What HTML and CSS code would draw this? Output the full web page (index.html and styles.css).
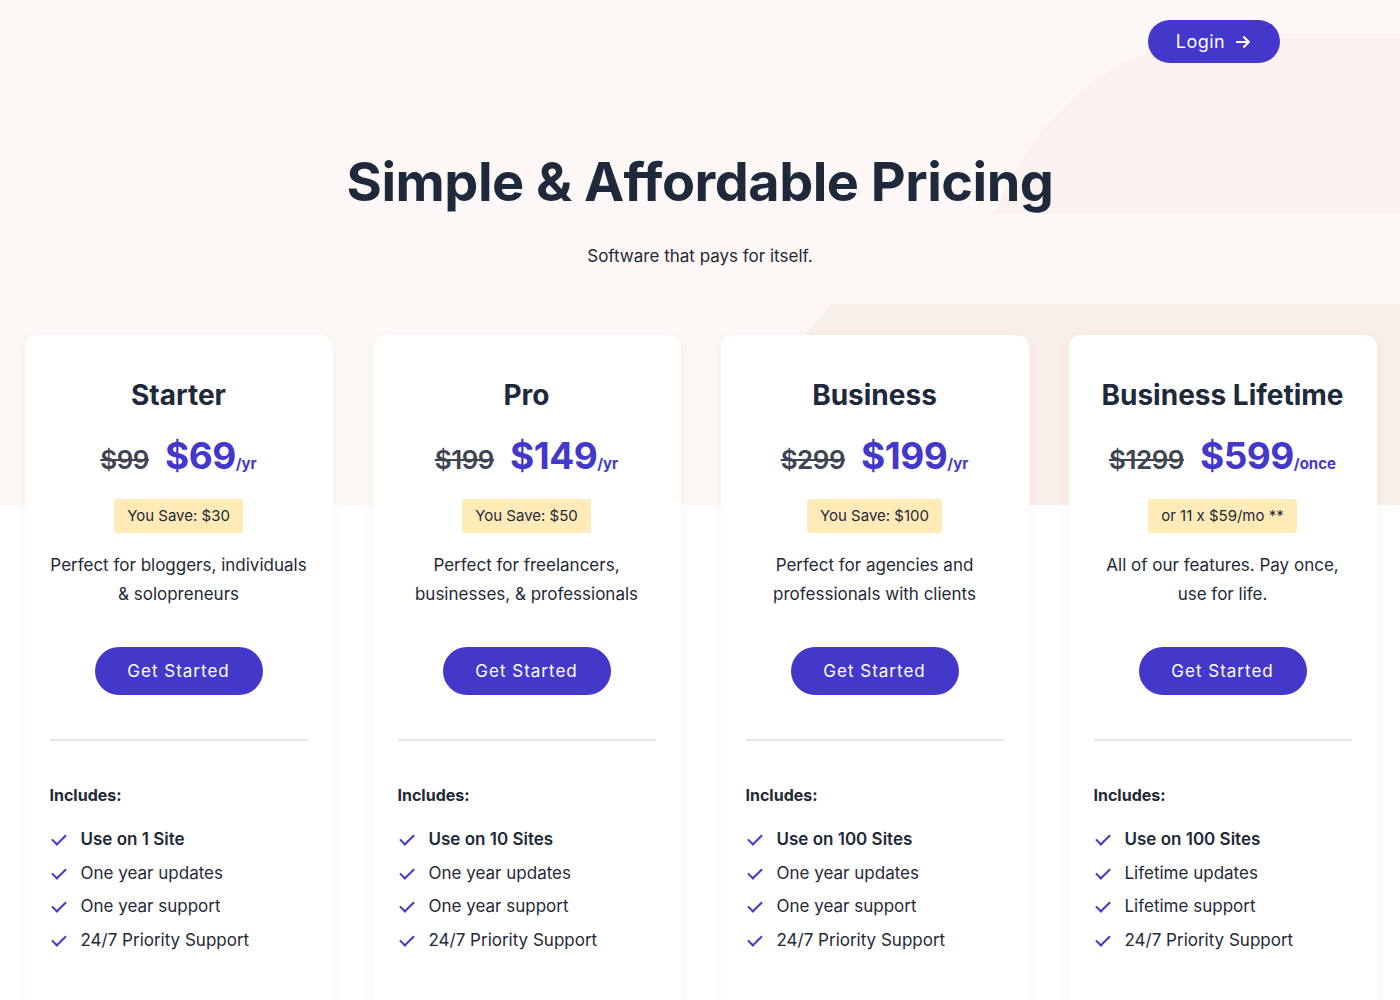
FILE: index.html
```html
<!DOCTYPE html>
<html lang="en">
<head>
    <meta charset="UTF-8">
    <meta name="viewport" content="width=device-width, initial-scale=1.0">
    <title>Pricing</title>
    <link rel="stylesheet" href="styles.css">
</head>
<body>

<div class="page">
    <!-- soft background shapes -->
    <svg class="bg-shapes" width="1400" height="505" viewBox="0 0 1400 505">
        <path d="M995 213 C1030 125 1100 50 1210 38 L1400 38 L1400 213 Z" fill="#faf2ee"/>
        <path d="M790 505 L790 352 L828 308 C830 305 832 304 836 304 L1400 304 L1400 505 Z" fill="#f9efea"/>
    </svg>

    <header class="topbar">
        <a href="#" class="login-btn">Login
            <svg width="18" height="18" viewBox="0 0 18 18" fill="none" stroke="currentColor" stroke-width="2.2" stroke-linecap="round" stroke-linejoin="round"><path d="M3 9h11.5M10 4.2 14.8 9 10 13.8"/></svg>
        </a>
    </header>

    <section class="hero">
        <h1>Simple &amp; Affordable Pricing</h1>
        <p>Software that pays for itself.</p>
    </section>

    <div class="plans">
        <div class="plan">
            <h2>Starter</h2>
            <div class="price"><s>$99</s><span class="now">$69</span><span class="per">/yr</span></div>
            <div class="save">You Save: $30</div>
            <p class="desc">Perfect for bloggers, individuals &amp; solopreneurs</p>
            <a href="#" class="cta">Get Started</a>
            <hr>
            <h3>Includes:</h3>
            <ul class="features">
                <li><b>Use on 1 Site</b></li>
                <li>One year updates</li>
                <li>One year support</li>
                <li>24/7 Priority Support</li>
            </ul>
        </div>
        <div class="plan">
            <h2>Pro</h2>
            <div class="price"><s>$199</s><span class="now">$149</span><span class="per">/yr</span></div>
            <div class="save">You Save: $50</div>
            <p class="desc">Perfect for freelancers, businesses, &amp; professionals</p>
            <a href="#" class="cta">Get Started</a>
            <hr>
            <h3>Includes:</h3>
            <ul class="features">
                <li><b>Use on 10 Sites</b></li>
                <li>One year updates</li>
                <li>One year support</li>
                <li>24/7 Priority Support</li>
            </ul>
        </div>
        <div class="plan">
            <h2>Business</h2>
            <div class="price"><s>$299</s><span class="now">$199</span><span class="per">/yr</span></div>
            <div class="save">You Save: $100</div>
            <p class="desc">Perfect for agencies and professionals with clients</p>
            <a href="#" class="cta">Get Started</a>
            <hr>
            <h3>Includes:</h3>
            <ul class="features">
                <li><b>Use on 100 Sites</b></li>
                <li>One year updates</li>
                <li>One year support</li>
                <li>24/7 Priority Support</li>
            </ul>
        </div>
        <div class="plan">
            <h2>Business Lifetime</h2>
            <div class="price"><s>$1299</s><span class="now">$599</span><span class="per">/once</span></div>
            <div class="save">or 11 x $59/mo **</div>
            <p class="desc">All of our features. Pay once, use for life.</p>
            <a href="#" class="cta">Get Started</a>
            <hr>
            <h3>Includes:</h3>
            <ul class="features">
                <li><b>Use on 100 Sites</b></li>
                <li>Lifetime updates</li>
                <li>Lifetime support</li>
                <li>24/7 Priority Support</li>
            </ul>
        </div>
    </div>
</div>

</body>
</html>
```

FILE: styles.css
```css
body {
    margin: 0;
    font-family: Inter, "Noto Sans", sans-serif;
    color: #1f2937;
    background-color: #fff;
}
.page {
    position: relative;
    min-height: 1000px;
    overflow: hidden;
    background: linear-gradient(#fdf8f6 505px, #fff 505px);
}
.bg-shapes {
    position: absolute;
    top: 0;
    left: 0;
    z-index: 0;
}
.topbar, .hero, .plans {
    position: relative;
    z-index: 1;
}
.topbar {
    display: flex;
    justify-content: flex-end;
    padding: 20px 120px 0 0;
}
.login-btn {
    display: inline-flex;
    align-items: center;
    justify-content: center;
    gap: 9px;
    height: 43px;
    width: 132px;
    background-color: #4338ca;
    color: #fff;
    text-decoration: none;
    border-radius: 22px;
    font-size: 18px;
    letter-spacing: 0.5px;
}
.hero {
    text-align: center;
    padding-top: 84px;
}
.hero h1 {
    margin: 0;
    font-size: 54px;
    font-weight: 700;
    letter-spacing: -0.5px;
    line-height: 70px;
    color: #1e293b;
}
.hero p {
    margin: 29px 0 0;
    font-size: 17px;
    color: #1f2937;
}
.plans {
    display: grid;
    grid-template-columns: repeat(4, 308px);
    gap: 40px;
    justify-content: center;
    margin-top: 69px;
    padding-left: 1px;
}
.plan {
    background-color: #fff;
    border-radius: 12px;
    box-shadow: 0 2px 10px rgba(120, 90, 70, 0.08);
    padding: 38px 25px 40px;
    text-align: center;
    height: 700px;
    box-sizing: border-box;
}
.plan h2 {
    margin: 0;
    font-size: 28px;
    font-weight: 700;
    line-height: 44px;
    color: #1e293b;
}
.price {
    display: flex;
    justify-content: center;
    align-items: baseline;
    margin-top: 16px;
    height: 46px;
}
.price s {
    font-size: 26px;
    font-weight: 600;
    color: #3f4451;
    margin-right: 16px;
    letter-spacing: -0.5px;
}
.price .now {
    font-size: 37px;
    font-weight: 700;
    color: #4338ca;
    letter-spacing: -0.5px;
}
.price .per {
    font-size: 15px;
    font-weight: 700;
    color: #4338ca;
}
.save {
    display: inline-block;
    margin-top: 20px;
    padding: 0 13px;
    height: 34px;
    line-height: 34px;
    background-color: #feebb8;
    border-radius: 2px;
    font-size: 15px;
    color: #1f2937;
}
.desc {
    margin: 18px 0 0;
    font-size: 17px;
    line-height: 29px;
    height: 58px;
}
.cta {
    display: inline-block;
    margin-top: 38px;
    width: 168px;
    height: 48px;
    line-height: 48px;
    background-color: #4338ca;
    color: #fff;
    text-decoration: none;
    border-radius: 24px;
    font-size: 17px;
    letter-spacing: 1px;
}
.plan hr {
    border: none;
    border-top: 2px solid #e6e6e6;
    margin: 44px 0 0;
}
.plan h3 {
    margin: 44px 0 0;
    font-size: 16px;
    font-weight: 700;
    text-align: left;
}
.features {
    list-style: none;
    margin: 18px 0 0;
    padding: 0;
    text-align: left;
}
.features li {
    position: relative;
    padding-left: 31px;
    font-size: 17px;
    line-height: 33.6px;
}
.features li b {
    font-weight: 600;
}
.features li::before {
    content: "";
    position: absolute;
    left: 2px;
    top: 11px;
    width: 12px;
    height: 6px;
    border-left: 2px solid #4338ca;
    border-bottom: 2px solid #4338ca;
    transform: rotate(-45deg);
}
```
